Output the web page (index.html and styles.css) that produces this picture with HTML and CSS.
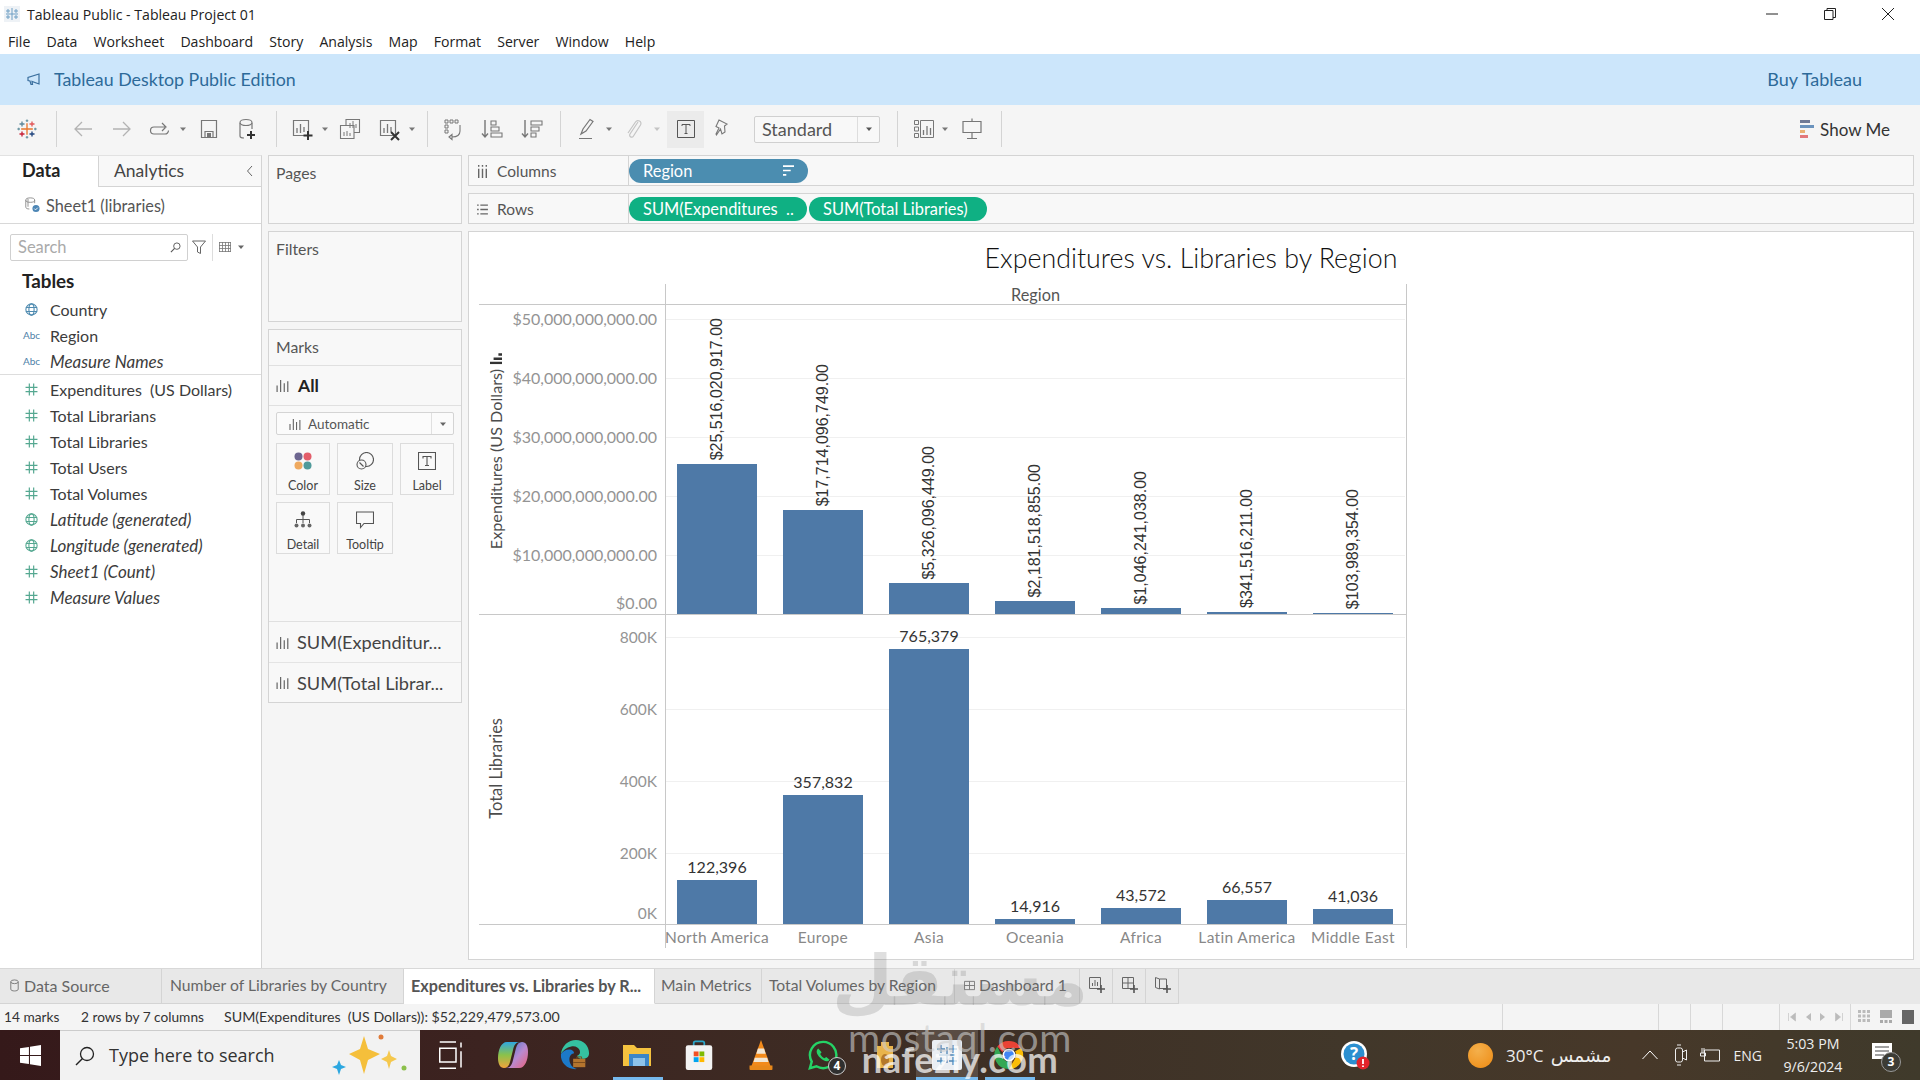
FILE: index.html
```html
<!DOCTYPE html>
<html lang="en">
<head>
<meta charset="utf-8">
<title>Tableau Public - Tableau Project 01</title>
<link rel="stylesheet" href="styles.css">
</head>
<body>
<svg class="defs" aria-hidden="true">
  <defs>
    <symbol id="hash" viewBox="0 0 12 12"><path d="M4 .5v11M8 .5v11M.5 4h11M.5 8h11" fill="none" stroke="currentColor" stroke-width="1.1"/></symbol>
    <symbol id="globe" viewBox="0 0 12 12"><g fill="none" stroke="currentColor" stroke-width="1"><circle cx="6" cy="6" r="5.2"/><ellipse cx="6" cy="6" rx="2.4" ry="5.2"/><path d="M.8 4.2h10.4M.8 7.8h10.4"/></g></symbol>
    <symbol id="bars" viewBox="0 0 12 12"><path d="M1 6v6M4.300 1v11M7.600 4v8M10.900 2v10" fill="none" stroke="currentColor" stroke-width="1"/></symbol>
    <symbol id="caret" viewBox="0 0 8 8"><path d="M1 2.500h6L4 6z" fill="currentColor"/></symbol>
    <symbol id="tcross" viewBox="0 0 24 24"><g stroke-width="1.600" fill="none"><path d="M12 5v14M5 12h14" stroke="#e8762d"/><path d="M6 3v6M3 6h6" stroke="#5b879b"/><path d="M18 3v6M15 6h6" stroke="#e15759"/><path d="M6 15v6M3 18h6" stroke="#c72037"/><path d="M18 15v6M15 18h6" stroke="#1f447e"/><path d="M12 .5v3M10.500 2h3M12 20.500v3M10.500 22h3M2 10.500v3M.5 12h3M22 10.500v3M20.500 12h3" stroke="#7099a6"/></g></symbol>
  </defs>
</svg>

<header class="titlebar">
  <svg class="appicon" viewBox="0 0 16 16"><rect width="16" height="16" fill="#eef2f6"/><path d="M8 2v12M2 8h12M4 3v4M2 5h4M12 3v4M10 5h4M4 9v4M2 11h4M12 9v4M10 11h4" stroke="#6f9fc4" stroke-width="1" fill="none"/></svg>
  <span class="apptitle">Tableau Public - Tableau Project 01</span>
  <div class="winbtns">
    <svg viewBox="0 0 12 12"><path d="M0 6h12" stroke="#222"/></svg>
    <svg viewBox="0 0 12 12"><path d="M.5 2.500h8.500v9H.5zM3 2.500V.5h8.500v9H9" fill="none" stroke="#222"/></svg>
    <svg viewBox="0 0 12 12"><path d="M0 0l12 12M12 0L0 12" stroke="#222"/></svg>
  </div>
</header>

<nav class="menubar">
  <span>File</span><span>Data</span><span>Worksheet</span><span>Dashboard</span><span>Story</span><span>Analysis</span><span>Map</span><span>Format</span><span>Server</span><span>Window</span><span>Help</span>
</nav>

<div class="banner">
  <svg class="horn" viewBox="0 0 14 14"><path d="M1 5.500v3l2 .5 1 3.500h1.500L5 9.500l7 2.500V2L1 5.500zM12 2v10" fill="none" stroke="#3a6f9e" stroke-width="1.200"/></svg>
  <span class="banner-title">Tableau Desktop Public Edition</span>
  <span class="buy">Buy Tableau</span>
</div>

<div class="toolbar">
  <svg class="ticon logo m17"><use href="#tcross"/></svg>
  <i class="sep m19"></i>
  <svg class="ticon faded m14" viewBox="0 0 24 24"><path d="M21 12H4M11 5l-7 7 7 7" fill="none" stroke="currentColor" stroke-width="1.300"/></svg>
  <svg class="ticon faded m15" viewBox="0 0 24 24"><path d="M3 12h17M13 5l7 7-7 7" fill="none" stroke="currentColor" stroke-width="1.300"/></svg>
  <svg class="ticon m13" viewBox="0 0 24 24"><path d="M18 10H7a3.500 3.500 0 0 0 0 7h11a3.500 3.500 0 0 0 3.500-3.500M15 6l4 4-4 4" fill="none" stroke="currentColor" stroke-width="1.200"/></svg>
  <svg class="tcaret m8"><use href="#caret"/></svg>
  <svg class="ticon m10" viewBox="0 0 24 24"><path d="M4.500 3.500h15v17h-15zM8 20.500v-6h8v6" fill="none" stroke="currentColor" stroke-width="1.200"/><path d="M10 16h4v4h-4z" fill="currentColor"/></svg>
  <svg class="ticon m14" viewBox="0 0 24 24"><path d="M5 6v13c0 1 1.500 2 4 2M17 6v6" fill="none" stroke="currentColor" stroke-width="1.200"/><ellipse cx="11" cy="5.500" rx="6" ry="3" fill="none" stroke="currentColor" stroke-width="1.200"/><path d="M16 14v8M12 18h8" stroke="#333" stroke-width="2"/></svg>
  <i class="sep m17"></i>
  <svg class="ticon m13" viewBox="0 0 24 24"><path d="M3.500 3.500h15v15h-15z" fill="none" stroke="currentColor" stroke-width="1.200"/><path d="M7 11v5M10.500 7v9M14 10v5" stroke="currentColor" stroke-width="1.300"/><path d="M18 14v9M13.500 18.500h9" stroke="#333" stroke-width="2"/></svg>
  <svg class="tcaret m7"><use href="#caret"/></svg>
  <svg class="ticon m9" viewBox="0 0 24 24"><path d="M8 8V2.500h13.500v13H16M2.500 8.500h13.500v13H2.500z" fill="none" stroke="currentColor" stroke-width="1.100"/><path d="M12 11V6M15 11V4M18 11V7M6 19v-4M9 19v-5M12 19v-3" stroke="currentColor"/></svg>
  <svg class="ticon m15" viewBox="0 0 24 24"><path d="M3.500 3.500h15v15h-15z" fill="none" stroke="currentColor" stroke-width="1.200"/><path d="M7 11v5M10.500 7v9M14 10v5" stroke="currentColor" stroke-width="1.300"/><path d="M14 15l8 8M22 15l-8 8" stroke="#333" stroke-width="2"/></svg>
  <svg class="tcaret m7"><use href="#caret"/></svg>
  <i class="sep m11"></i>
  <svg class="ticon m12" viewBox="0 0 24 24"><path d="M5 3h3v3H5zM10 3h3v3h-3zM15 3h3v3h-3zM5 8h3v3H5zM5 13h3v3H5z" fill="none" stroke="currentColor"/><path d="M20 8v6c0 4-3 6-8 6M9 20l3-2.500v5z" fill="none" stroke="currentColor" stroke-width="1.100"/></svg>
  <svg class="ticon m16" viewBox="0 0 24 24"><path d="M5 3v17M2 16.500L5 20l3-3.500" fill="none" stroke="currentColor" stroke-width="1.400"/><path d="M11 4h5v4h-5zM11 10h8v4h-8zM11 16h11v4H11z" fill="none" stroke="currentColor" stroke-width="1.100"/></svg>
  <svg class="ticon m16" viewBox="0 0 24 24"><path d="M5 3v17M2 16.500L5 20l3-3.500" fill="none" stroke="currentColor" stroke-width="1.400"/><path d="M11 4h11v4H11zM11 10h8v4h-8zM11 16h5v4h-5z" fill="none" stroke="currentColor" stroke-width="1.100"/></svg>
  <i class="sep m16"></i>
  <svg class="ticon m14" viewBox="0 0 24 24"><path d="M6 17l2-5L15 2.500l3 2L11 14l-5 3zM4 21.500h13" fill="none" stroke="currentColor" stroke-width="1.200"/></svg>
  <svg class="tcaret m6"><use href="#caret"/></svg>
  <svg class="ticon clip m8" viewBox="0 0 24 24"><path d="M17 5l-8 12c-1.500 2.500 2 4.500 3.500 2l7-11c2-3.500-3-6-5-3L7 16" fill="none" stroke="currentColor" stroke-width="1.200"/></svg>
  <svg class="tcaret clip m8"><use href="#caret"/></svg>
  <span class="tactive m6"><svg viewBox="0 0 18 18"><path d="M.5.5h17v17H.5z" fill="none" stroke="#555"/><path d="M5 6V4.500h8V6M9 4.500v9M7.500 13.500h3" fill="none" stroke="#555"/></svg></span>
  <svg class="ticon m6" viewBox="0 0 24 24"><path d="M9 3l8 4-2.500 2 .5 6-3 2-1.500-5-4 6-.5-1 3-6-3-1.500z" fill="none" stroke="currentColor" stroke-width="1.100"/></svg>
  <div class="fitbox m20"><span class="fit-text">Standard</span><span class="fit-drop"><svg class="tcaret"><use href="#caret"/></svg></span></div>
  <i class="sep m17"></i>
  <svg class="ticon m14" viewBox="0 0 24 24"><path d="M2.500 3.500h4v4h-4zM2.500 10h4v4h-4zM2.500 16.500h4v4h-4zM8.500 3.500h13v17h-13z" fill="none" stroke="currentColor"/><path d="M11.500 18v-5M15 18v-9M18.500 18v-7" stroke="currentColor" stroke-width="1.300"/></svg>
  <svg class="tcaret m5"><use href="#caret"/></svg>
  <svg class="ticon m11" viewBox="0 0 24 24"><path d="M3 4.500h18v11H3zM12 15.500v6M7 21.500h10M12 1.500v3" fill="none" stroke="currentColor" stroke-width="1.200"/></svg>
  <i class="sep m17"></i>
  <div class="showme">
    <svg viewBox="0 0 14 18"><path d="M0 0h10v3H0z" fill="#6f7a96"/><path d="M0 5h14v3H0z" fill="#6b93bd"/><path d="M0 10h5v3H0z" fill="#e9b071"/><path d="M0 15h8v3H0z" fill="#e2777a"/></svg>
    <span>Show Me</span>
  </div>
</div>

<main class="main">
  <aside class="datapane">
    <div class="ptabs">
      <span class="ptab-data">Data</span>
      <span class="ptab-an">Analytics<svg viewBox="0 0 8 12"><path d="M6 1L1.500 6 6 11" fill="none" stroke="#666"/></svg></span>
    </div>
    <div class="source">
      <svg viewBox="0 0 18 18"><g fill="none" stroke="#888"><ellipse cx="7" cy="3.500" rx="5" ry="2.500"/><path d="M2 3.500v8c0 1 1.500 2 4 2M12 3.500V7"/><path d="M4.500 2v9"/></g><circle cx="13.500" cy="13" r="4" fill="#4d86b5"/><path d="M11.500 13l1.500 1.500 2.500-2.500" stroke="#fff" fill="none"/></svg>
      <span>Sheet1 (libraries)</span>
    </div>
    <div class="searchrow">
      <div class="search"><span>Search</span><svg viewBox="0 0 12 12"><circle cx="7.500" cy="4.500" r="3.500" fill="none" stroke="#555"/><path d="M5 7l-4 4" stroke="#555" stroke-width="1.200"/></svg></div>
      <svg class="filt" viewBox="0 0 14 14"><path d="M.5 1h13L8.500 7v6.500l-3-1.500V7z" fill="none" stroke="#666"/></svg>
      <i class="vbar"></i>
      <svg class="gridic" viewBox="0 0 12 10"><path d="M0 .5h12M0 3.500h12M0 6.500h12M0 9.500h12M.5 0v10M3.500 0v10M6.500 0v10M9.500 0v10M11.500 0v10" stroke="#777" stroke-width=".8"/></svg>
      <svg class="gridcaret"><use href="#caret"/></svg>
    </div>
    <h3 class="tables">Tables</h3>
    <ul class="fields">
      <li><svg class="blue"><use href="#globe"/></svg><span>Country</span></li>
      <li><b class="abc">Abc</b><span>Region</span></li>
      <li class="divide"><b class="abc">Abc</b><em>Measure Names</em></li>
      <li><svg class="green"><use href="#hash"/></svg><span>Expenditures&nbsp; (US Dollars)</span></li>
      <li><svg class="green"><use href="#hash"/></svg><span>Total Librarians</span></li>
      <li><svg class="green"><use href="#hash"/></svg><span>Total Libraries</span></li>
      <li><svg class="green"><use href="#hash"/></svg><span>Total Users</span></li>
      <li><svg class="green"><use href="#hash"/></svg><span>Total Volumes</span></li>
      <li><svg class="green"><use href="#globe"/></svg><em>Latitude (generated)</em></li>
      <li><svg class="green"><use href="#globe"/></svg><em>Longitude (generated)</em></li>
      <li><svg class="green"><use href="#hash"/></svg><em>Sheet1 (Count)</em></li>
      <li><svg class="green"><use href="#hash"/></svg><em>Measure Values</em></li>
    </ul>
  </aside>

  <div class="cards">
    <section class="card pages"><h4>Pages</h4></section>
    <section class="card filters"><h4>Filters</h4></section>
    <section class="card marks">
      <h4 class="marks-h">Marks</h4>
      <div class="marks-all"><svg><use href="#bars"/></svg><strong>All</strong></div>
      <div class="marks-body">
        <div class="marktype"><svg><use href="#bars"/></svg><span>Automatic</span><span class="mt-drop"><svg><use href="#caret"/></svg></span></div>
        <div class="markbtns">
          <div class="mbtn"><svg viewBox="0 0 18 18"><circle cx="4.500" cy="4.500" r="4" fill="#6d6690"/><circle cx="13.500" cy="4.500" r="4" fill="#e35d6a"/><circle cx="4.500" cy="13.500" r="4" fill="#efa95f"/><circle cx="13.500" cy="13.500" r="4" fill="#4f9a9a"/></svg><span>Color</span></div>
          <div class="mbtn"><svg viewBox="0 0 18 18"><g fill="none" stroke="#555" stroke-width="1.100"><circle cx="10.500" cy="7.500" r="7"/><circle cx="5.500" cy="12.500" r="4.500" fill="#f8f8f8"/><path d="M3.500 10.500l4 4"/></g></svg><span>Size</span></div>
          <div class="mbtn"><svg viewBox="0 0 18 18"><path d="M.5.5h17v17H.5z" fill="none" stroke="#555" stroke-width="1.100"/><path d="M5 6.500V4.500h8v2M9 4.500v9M7 13.500h4" fill="none" stroke="#555" stroke-width="1.100"/></svg><span>Label</span></div>
          <div class="mbtn"><svg viewBox="0 0 18 18"><circle cx="9" cy="2.500" r="2.200" fill="#444"/><path d="M9 4v8M2.500 12V8.500h13V12" fill="none" stroke="#555"/><circle cx="2.500" cy="14.500" r="2" fill="#666"/><circle cx="9" cy="14.500" r="2" fill="#666"/><circle cx="15.500" cy="14.500" r="2" fill="#666"/></svg><span>Detail</span></div>
          <div class="mbtn"><svg viewBox="0 0 18 18"><path d="M.5 1h17v11.500H8L4.500 16.500v-4H.5z" fill="none" stroke="#555" stroke-width="1.100"/></svg><span>Tooltip</span></div>
        </div>
      </div>
      <div class="marks-pill"><svg><use href="#bars"/></svg><span>SUM(Expenditur...</span></div>
      <div class="marks-pill"><svg><use href="#bars"/></svg><span>SUM(Total Librar...</span></div>
    </section>
  </div>

  <div class="work">
    <div class="shelf">
      <div class="shelf-label"><svg viewBox="0 0 10 12"><path d="M1.500 0v1.500M5 0v1.500M8.500 0v1.500M1.500 3.500V12M5 3.500V12M8.500 3.500V12" stroke="#666" stroke-width="1.300" fill="none"/></svg><span>Columns</span></div>
      <div class="pill blue-pill">Region<svg viewBox="0 0 10 10"><path d="M0 1h10M0 5h7M0 9h3" stroke="#fff" stroke-width="1.500"/></svg></div>
    </div>
    <div class="shelf">
      <div class="shelf-label"><svg viewBox="0 0 10 12"><path d="M0 2h1.500M3 2h7M0 6h1.500M3 6h7M0 10h1.500M3 10h7" stroke="#666" stroke-width="1.200"/></svg><span>Rows</span></div>
      <div class="pill green-pill">SUM(Expenditures&nbsp; ..</div>
      <div class="pill green-pill">SUM(Total Libraries)</div>
    </div>
    <section class="canvas">
      <h2 class="viz-title">Expenditures vs. Libraries by Region</h2>
      <div class="plot">
        <div class="prow head"><div></div><div class="plot-cell head-cell">Region</div></div>

        <div class="prow pane pane-a">
          <div class="axis">
            <div class="axis-title"><span>Expenditures (US Dollars)</span><svg viewBox="0 0 10 10"><path d="M1 0v10M4.500 3v7M8 7v3" stroke="#333" stroke-width="2"/></svg></div>
            <div class="ticks">
              <div class="tick">$50,000,000,000.00</div><div class="tick">$40,000,000,000.00</div><div class="tick">$30,000,000,000.00</div><div class="tick">$20,000,000,000.00</div><div class="tick">$10,000,000,000.00</div><div class="tick">$0.00</div>
            </div>
          </div>
          <div class="plot-cell">
            <div class="gridlines"><i></i><i></i><i></i><i></i><i></i></div>
            <div class="bars">
              <div class="bcol"><span class="vlabel">$25,516,020,917.00</span><div class="bar" style="height:150px"></div></div>
              <div class="bcol"><span class="vlabel">$17,714,096,749.00</span><div class="bar" style="height:104px"></div></div>
              <div class="bcol"><span class="vlabel">$5,326,096,449.00</span><div class="bar" style="height:31px"></div></div>
              <div class="bcol"><span class="vlabel">$2,181,518,855.00</span><div class="bar" style="height:13px"></div></div>
              <div class="bcol"><span class="vlabel">$1,046,241,038.00</span><div class="bar" style="height:6px"></div></div>
              <div class="bcol"><span class="vlabel">$341,516,211.00</span><div class="bar" style="height:2px"></div></div>
              <div class="bcol"><span class="vlabel">$103,989,354.00</span><div class="bar" style="height:1px"></div></div>
            </div>
          </div>
        </div>

        <div class="prow pane pane-b">
          <div class="axis">
            <div class="axis-title"><span>Total Libraries</span></div>
            <div class="ticks">
              <div class="tick">800K</div><div class="tick">600K</div><div class="tick">400K</div><div class="tick">200K</div><div class="tick">0K</div>
            </div>
          </div>
          <div class="plot-cell">
            <div class="gridlines"><i></i><i></i><i></i><i></i></div>
            <div class="bars">
              <div class="bcol"><span class="hlabel">122,396</span><div class="bar" style="height:44px"></div></div>
              <div class="bcol"><span class="hlabel">357,832</span><div class="bar" style="height:129px"></div></div>
              <div class="bcol"><span class="hlabel">765,379</span><div class="bar" style="height:275px"></div></div>
              <div class="bcol"><span class="hlabel">14,916</span><div class="bar" style="height:5px"></div></div>
              <div class="bcol"><span class="hlabel">43,572</span><div class="bar" style="height:16px"></div></div>
              <div class="bcol"><span class="hlabel">66,557</span><div class="bar" style="height:24px"></div></div>
              <div class="bcol"><span class="hlabel">41,036</span><div class="bar" style="height:15px"></div></div>
            </div>
          </div>
        </div>

        <div class="prow xrow">
          <div></div>
          <div class="plot-cell xcats"><span>North America</span><span>Europe</span><span>Asia</span><span>Oceania</span><span>Africa</span><span>Latin America</span><span>Middle East</span></div>
        </div>
      </div>
    </section>
  </div>
</main>

<div class="tabs">
  <div class="tab t1"><svg viewBox="0 0 10 14"><ellipse cx="5" cy="3" rx="4" ry="2" fill="none" stroke="#777"/><path d="M1 3v8c0 2.500 8 2.500 8 0V3" fill="none" stroke="#777"/></svg>Data Source</div>
  <div class="tab t2">Number of Libraries by Country</div>
  <div class="tab t3 active">Expenditures vs. Libraries by R...</div>
  <div class="tab t4">Main Metrics</div>
  <div class="tab t5">Total Volumes by Region</div>
  <div class="tab t6"><svg viewBox="0 0 12 12"><path d="M.5 1.500h11v9H.5zM6 1.500v9M.5 6h11" fill="none" stroke="#777"/></svg>Dashboard 1</div>
  <div class="tab tn"><svg viewBox="0 0 18 18"><path d="M1.500 1.500h11v11h-11z" fill="none" stroke="#666"/><path d="M4.500 10V7M7 10V4M9.500 10V6" stroke="#666"/><path d="M13 9v8M9 13h8" stroke="#555" stroke-width="1.600"/></svg></div>
  <div class="tab tn"><svg viewBox="0 0 18 18"><path d="M1.500 1.500h11v11h-11zM7 1.500v11M1.500 7h11" fill="none" stroke="#666"/><path d="M13 9v8M9 13h8" stroke="#555" stroke-width="1.600"/></svg></div>
  <div class="tab tn"><svg viewBox="0 0 18 18"><path d="M1.500 1.500l4 1.500v10l-4-1.500zM5.500 3h7v9.500h-7" fill="none" stroke="#666"/><path d="M13 9v8M9 13h8" stroke="#555" stroke-width="1.600"/></svg></div>
</div>

<div class="status">
  <span class="s1">14 marks</span><span class="s2">2 rows by 7 columns</span><span class="s3">SUM(Expenditures&nbsp; (US Dollars)): $52,229,479,573.00</span>
  <div class="cells">
    <i class="c156"></i><i class="c32"></i><i class="c32"></i><i class="c57"></i>
    <div class="navcell">
      <svg viewBox="0 0 8 10"><path d="M.5 1v8M7.500 1L2.500 5l5 4z" fill="#bbb" stroke="#bbb" stroke-width=".6"/></svg>
      <svg viewBox="0 0 8 10"><path d="M7 1L2 5l5 4z" fill="#bbb"/></svg>
      <svg viewBox="0 0 8 10"><path d="M1 1l5 4-5 4z" fill="#bbb"/></svg>
      <svg viewBox="0 0 8 10"><path d="M7.500 1v8M.5 1l5 4-5 4z" fill="#bbb" stroke="#bbb" stroke-width=".6"/></svg>
    </div>
    <div class="viewcell">
      <svg viewBox="0 0 12 14"><path d="M0 0h3v3H0zM4.500 0h3v3h-3zM9 0h3v3H9zM0 4.500h3v3H0zM4.500 4.500h3v3h-3zM9 4.500h3v3H9zM0 9h3v3H0zM4.500 9h3v3h-3zM9 9h3v3H9z" fill="#bbb"/></svg>
      <svg viewBox="0 0 12 14"><path d="M0 0h12v8H0zM0 10h3v3H0zM4.500 10h3v3h-3zM9 10h3v3H9z" fill="#aaa"/></svg>
      <svg viewBox="0 0 12 14"><path d="M0 0h12v14H0z" fill="#666"/></svg>
    </div>
  </div>
</div>

<footer class="taskbar">
  <div class="start"><svg viewBox="0 0 20 20"><path d="M0 3l8.500-1.200v7.700H0zM9.500 1.700L20 0v9.500H9.500zM0 10.500h8.500v7.700L0 17zM9.500 10.500H20V20L9.500 18.300z" fill="#fff"/></svg></div>
  <div class="tsearch">
    <svg class="mag" viewBox="0 0 20 20"><circle cx="12" cy="8" r="6.500" fill="none" stroke="#222" stroke-width="1.300"/><path d="M7.500 12.500L1 19" stroke="#222" stroke-width="1.500"/></svg>
    <span>Type here to search</span>
    <svg class="spark" viewBox="0 0 76 46"><path d="M32 3l4 13 12 5-12 6-4 14-4-14-11-6 11-5z" fill="#f5bf3b"/><path d="M57 17l2 6 6 3-6 3-2 7-2-7-6-3 6-3z" fill="#f5c84d"/><path d="M7 27l2 5 5 2-5 2-2 6-2-6-5-2 5-2z" fill="#2ca7e0"/><circle cx="49" cy="4" r="2.500" fill="#e07b39"/><circle cx="72" cy="35" r="2.500" fill="#8cc04b"/></svg>
  </div>
  <div class="tapp"><svg viewBox="0 0 20 24"><path d="M1 1.500h13M1 22.500h13M1 6.500h13v11H1zM18 2v4M18 9v13" fill="none" stroke="#fff" stroke-width="1.200"/></svg></div>
  <div class="tapp"><svg viewBox="0 0 30 28"><defs><linearGradient id="cop1" x1="0" y1="0" x2="0" y2="1"><stop offset="0" stop-color="#2fa7e0"/><stop offset=".5" stop-color="#8ac24a"/><stop offset="1" stop-color="#f2a33c"/></linearGradient><linearGradient id="cop2" x1="0" y1="0" x2="1" y2="1"><stop offset="0" stop-color="#3878d0"/><stop offset=".55" stop-color="#b98ad0"/><stop offset="1" stop-color="#e9607a"/></linearGradient></defs><path d="M9 1h13c-4 0-6 3-7 8l-3 12c-1 4-3 6-6 6-4 0-6-4-6-10C0 9 3 1 9 1z" fill="url(#cop1)"/><path d="M21 27H8c4 0 6-3 7-8l3-12c1-4 3-6 6-6 4 0 6 4 6 10 0 8-3 16-9 16z" fill="url(#cop2)"/></svg></div>
  <div class="tapp"><svg viewBox="0 0 32 32"><path d="M1 15C2 6 9 0 17 0c8 0 14 6 14 14 0 4-3 6-7 6-3 0-5-1-6-3 3-1 4-3 3-6-1-3-5-5-9-4-5 1-9 4-11 8z" fill="#35c1a0"/><path d="M1 15c2-3 5-5 9-5 3 0 5 2 5 4-5 1-6 6-4 11 1 3 4 5 7 6C9 32 0 25 1 15z" fill="#1c79c9"/><path d="M14 20h13v9H14z" fill="#b4742e"/><path d="M18 20v-2h5v2M14 24h13" fill="none" stroke="#7a4b1c"/></svg></div>
  <div class="tapp open"><svg viewBox="0 0 30 26"><path d="M1 3h11l3 3h14v18H1z" fill="#f4c23f"/><path d="M7 12h20v12H7z" fill="#3b86c8"/><path d="M11 16h12v8H11z" fill="#8ec3ea"/></svg></div>
  <div class="tapp"><svg viewBox="0 0 30 34"><path d="M9 7V3.500a2 2 0 0 1 2-2h8a2 2 0 0 1 2 2V7" fill="none" stroke="#2ba6c9" stroke-width="2"/><rect x="0" y="6" width="30" height="28" rx="2.500" fill="#f3f3f3"/><path d="M9 13h5.500v5.500H9z" fill="#f25022"/><path d="M15.500 13H21v5.500h-5.500z" fill="#7fba00"/><path d="M9 19.500h5.500V25H9z" fill="#00a4ef"/><path d="M15.500 19.500H21V25h-5.500z" fill="#ffb900"/></svg></div>
  <div class="tapp"><svg viewBox="0 0 26 34"><path d="M13 0L2 30h22z" fill="#f28a1b"/><path d="M9.500 9.500h7l1.800 6H7.700zM6 20h14l1.500 5h-17z" fill="#f1e6d4"/><path d="M0 29h26v4a1 1 0 0 1-1 1H1a1 1 0 0 1-1-1z" fill="#e8881a"/></svg></div>
  <div class="tapp wa"><svg viewBox="0 0 32 32"><path d="M16 2a14 14 0 0 0-12 21L2 30l7-2A14 14 0 1 0 16 2z" fill="none" stroke="#25d366" stroke-width="2.600"/><path d="M11 9c-3 2-2 6 2 10s8 5 10 2l-3.500-3-2 1.500c-2-1-3.500-2.500-4.500-4.500l1.500-2z" fill="#25d366"/></svg><b class="wa-badge">4</b></div>
  <div class="tapp"><svg viewBox="0 0 26 30"><path d="M9 2h8v4h4v22H5V6h4z" fill="#e9b44c"/><path d="M13 14a4 6 0 1 1-.01 0z" fill="#b5792a"/></svg></div>
  <div class="tapp current"><svg viewBox="0 0 30 30"><rect width="30" height="30" rx="2" fill="#eaeef3"/><svg x="3" y="3" width="24" height="24" viewBox="0 0 24 24"><path d="M12 4v16M4 12h16M6 2v8M2 6h8M18 2v8M14 6h8M6 14v8M2 18h8M18 14v8M14 18h8" stroke="#4f86b5" stroke-width="1.300" fill="none"/></svg></svg></div>
  <div class="tapp open chrome"><svg viewBox="0 0 32 32"><path d="M16 1a15 15 0 0 1 13 7.500H16a7.500 7.500 0 0 0-7 4.500L3.500 7A15 15 0 0 1 16 1z" fill="#ea4335"/><path d="M29 8.500A15 15 0 0 1 16 31l6.500-11.300A7.500 7.500 0 0 0 22.500 12z" fill="#fbbc05"/><path d="M16 31A15 15 0 0 1 3.500 7L9.500 19.500A7.500 7.500 0 0 0 17 23z" fill="#34a853"/><circle cx="16" cy="16" r="6" fill="#4285f4" stroke="#fff" stroke-width="1.500"/></svg></div>

  <svg class="helpic" viewBox="0 0 30 32"><circle cx="14" cy="15" r="13" fill="#fff"/><circle cx="14" cy="15" r="10.500" fill="#2b8fd0"/><text x="14" y="21" class="helpq">?</text><circle cx="23" cy="24" r="6.500" fill="#e3242b"/><path d="M23 20v5M23 26.500v1.500" stroke="#fff" stroke-width="1.800"/></svg>
  <div class="sun"></div>
  <span class="temp">30°C</span>
  <span class="weather" lang="ar" dir="rtl">مشمس</span>
  <svg class="chev" viewBox="0 0 16 10"><path d="M.5 9L8 1l7.500 8" fill="none" stroke="#fff"/></svg>
  <svg class="cam" viewBox="0 0 14 22"><path d="M1.500 6v10a2 2 0 0 0 2 2h3a2 2 0 0 0 2-2V6a2 2 0 0 0-2-2h-3a2 2 0 0 0-2 2zM8.500 8l4-2v10l-4-2zM3 1h4M3 21h4" fill="none" stroke="#eee"/></svg>
  <svg class="batt" viewBox="0 0 20 16"><path d="M4.500 3h15v11h-15zM2 1v5M4 1v5M.5 6h5v3h-5z" fill="none" stroke="#eee"/></svg>
  <span class="eng">ENG</span>
  <div class="clock"><span>5:03 PM</span><span>9/6/2024</span></div>
  <div class="notif"><svg viewBox="0 0 20 20"><path d="M0 0h20v16H0z" fill="#fff"/><path d="M3 4h14M3 8h14M3 12h9" stroke="#444"/></svg><b>3</b></div>
</footer>

<div class="watermark" aria-hidden="true">
  <span class="wm-ar" lang="ar" dir="rtl">مستقل</span>
  <span class="wm-m">mostaql.com</span>
  <span class="wm-n">nafezly.com</span>
</div>
</body>
</html>
```

FILE: styles.css
```css
* { box-sizing: border-box; }
html, body { margin: 0; padding: 0; }
body {
  width: 1920px; height: 1080px; overflow: hidden; position: relative;
  display: flex; flex-direction: column;
  font-family: Lato, "Open Sans", sans-serif; color: #333; background: #fff;
}
.defs { position: absolute; width: 0; height: 0; }
h2, h3, h4, ul { margin: 0; padding: 0; font-weight: 400; }
i { font-style: normal; }
em { font-style: italic; }

/* window chrome */
.titlebar { height: 27px; display: flex; align-items: center; padding: 1px 0 0 4px; background: #fff; flex: none; }
.appicon { width: 16px; height: 16px; }
.apptitle { font: 14.100px "Open Sans", sans-serif; color: #222; margin-left: 7px; }
.winbtns { margin-left: auto; display: flex; padding-right: 26px; gap: 46px; }
.winbtns svg { width: 12px; height: 12px; }

.menubar { height: 27px; display: flex; align-items: center; padding: 1px 0 0 8px; gap: 16.100px; font: 14.100px "Open Sans", sans-serif; color: #222; flex: none; }

.banner { height: 51px; background: #cce6fb; display: flex; align-items: center; padding: 0 0 1px 27px; flex: none; line-height: 22px; }
.horn { width: 14px; height: 14px; }
.banner-title { margin-left: 13px; font-size: 17.800px; color: #2d6a99; }
.buy { margin-left: auto; margin-right: 58px; font-size: 18px; color: #2d6a99; }

/* toolbar */
.toolbar { height: 50px; background: #f5f5f5; display: flex; align-items: center; flex: none; color: #777; padding-bottom: 2px; }
.ticon { width: 24px; height: 24px; color: #777; flex: none; }
.ticon.logo { width: 20px; height: 20px; }
.faded { color: #b3b3b3; }
.clip { color: #c4c4c4; }
.tcaret { width: 8px; height: 8px; color: #777; flex: none; }
.tcaret.clip { color: #c4c4c4; }
.sep { width: 1px; height: 36px; background: #d4d4d4; flex: none; }
.tactive { width: 37px; height: 37px; background: #ebebeb; display: flex; align-items: center; justify-content: center; flex: none; }
.tactive svg { width: 18px; height: 18px; }
.fitbox { width: 126px; height: 27px; border: 1px solid #d0d0d0; border-radius: 2px; display: flex; align-items: center; flex: none; background: #f8f8f8; }
.fit-text { flex: 1; padding-left: 7px; font-size: 18px; color: #555; }
.fit-drop { width: 22px; height: 100%; border-left: 1px solid #ddd; display: flex; align-items: center; justify-content: center; }
.fit-drop .tcaret { color: #555; }
.showme { margin-left: auto; margin-right: 30px; display: flex; align-items: center; gap: 6px; font-size: 17px; color: #333; }
.showme svg { width: 14px; height: 18px; }
.m5 { margin-left: 5px; } .m6 { margin-left: 6px; } .m7 { margin-left: 7px; } .m8 { margin-left: 8px; }
.m9 { margin-left: 9px; } .m10 { margin-left: 10px; } .m11 { margin-left: 11px; } .m12 { margin-left: 12px; }
.m13 { margin-left: 13px; } .m14 { margin-left: 14px; } .m15 { margin-left: 15px; } .m16 { margin-left: 16px; }
.m17 { margin-left: 17px; } .m19 { margin-left: 19px; } .m20 { margin-left: 20px; }

/* main area */
.main { height: 813px; flex: none; display: flex; background: #f5f5f5; }
.datapane { width: 262px; background: #fff; border-right: 1px solid #d4d4d4; border-top: 1px solid #e2e2e2; margin-right: 6px; flex: none; }
.ptabs { height: 31px; display: flex; }
.ptab-data { width: 98px; padding-left: 22px; font-size: 18px; font-weight: 700; color: #222; line-height: 29px; }
.ptab-an { flex: 1; background: #f8f8f8; border-left: 1px solid #d4d4d4; border-bottom: 1px solid #d4d4d4; padding-left: 15px; font-size: 17.500px; line-height: 30px; color: #444; display: flex; align-items: center; justify-content: space-between; padding-right: 7px; }
.ptab-an svg { width: 8px; height: 12px; }
.source { height: 37px; border-bottom: 1px solid #d8d8d8; display: flex; align-items: center; padding-left: 24px; gap: 6px; font-size: 16.300px; color: #555; }
.source svg { width: 16px; height: 18px; }
.searchrow { height: 46px; display: flex; align-items: center; padding: 0 0 0 10px; }
.search { width: 178px; height: 27px; border: 1px solid #d0d0d0; border-radius: 2px; display: flex; align-items: center; justify-content: space-between; padding: 0 6px 0 7px; font-size: 16.500px; color: #aaa; }
.search svg { width: 11px; height: 11px; }
.filt { width: 14px; height: 14px; margin-left: 4px; }
.vbar { width: 1px; height: 27px; background: #ddd; margin-left: 6px; }
.gridic { width: 12px; height: 10px; margin-left: 6px; }
.gridcaret { width: 8px; height: 8px; margin-left: 6px; color: #666; }
.tables { font-size: 18.800px; font-weight: 700; color: #222; padding-left: 22px; height: 26px; line-height: 22px; }
.fields { list-style: none; }
.fields li { height: 26.100px; display: flex; align-items: center; padding-left: 19px; font-size: 16px; color: #3c3c3c; }
.fields li em { font-size: 17px; }
.fields li svg { width: 13px; height: 13px; margin-left: 6px; margin-right: 12px; flex: none; }
.fields li .abc { width: 25px; font-size: 10px; font-weight: 400; color: #4f7fa8; text-align: center; margin-right: 6px; flex: none; }
.fields li.divide { border-bottom: 1px solid #ddd; height: 27px; margin-bottom: 1px; }
.blue { color: #4f8bb0; }
.green { color: #55a891; }

.cards { width: 194px; flex: none; margin-right: 6px; display: flex; flex-direction: column; gap: 7px; }
.card { background: #f8f8f8; border: 1px solid #d4d4d4; }
.card h4 { font-size: 15.800px; color: #555; padding: 7px 7px 0; }
.pages { height: 69px; }
.filters { height: 91px; }
.marks { height: 374px; display: flex; flex-direction: column; }
.card h4.marks-h { height: 36px; padding: 7px 7px 0; border-bottom: 1px solid #e0e0e0; flex: none; }
.marks-all { height: 40px; display: flex; align-items: center; padding-left: 7px; border-bottom: 1px solid #e0e0e0; flex: none; }
.marks-all svg { width: 13px; height: 13px; color: #555; }
.marks-all strong { margin-left: 9px; font-size: 17.500px; color: #222; }
.marks-body { flex: 1; padding: 6px 7px 0; border-bottom: 1px solid #e0e0e0; }
.marktype { height: 23px; border: 1px solid #d4d4d4; border-radius: 2px; display: flex; align-items: center; padding-left: 12px; font-size: 13.500px; color: #555; background: #fbfbfb; }
.marktype > svg { width: 12px; height: 12px; color: #555; margin-right: 7px; }
.mt-drop { margin-left: auto; width: 22px; height: 100%; border-left: 1px solid #e0e0e0; display: flex; align-items: center; justify-content: center; }
.mt-drop svg { width: 8px; height: 8px; color: #666; }
.markbtns { display: grid; grid-template-columns: 54px 56px 54px; grid-auto-rows: 52px; gap: 7px; margin-top: 8px; }
.mbtn { border: 1px solid #dcdcdc; display: flex; flex-direction: column; align-items: center; font-size: 12.500px; color: #444; padding-top: 8px; background: #f9f9f9; }
.mbtn svg { width: 18px; height: 18px; margin-bottom: 8px; }
.marks-pill { height: 40px; display: flex; align-items: center; padding-left: 7px; flex: none; font-size: 18.200px; color: #444; }
.marks-pill + .marks-pill { border-top: 1px solid #e4e4e4; }
.marks-pill svg { width: 13px; height: 13px; color: #555; margin-right: 8px; flex: none; }

.work { width: 1446px; flex: none; display: flex; flex-direction: column; gap: 7px; }
.shelf { height: 31px; background: #f8f8f8; border: 1px solid #d4d4d4; display: flex; align-items: center; gap: 2px; flex: none; }
.shelf-label { width: 160px; height: 100%; border-right: 1px solid #d4d4d4; display: flex; align-items: center; padding: 1px 0 0 8px; gap: 9px; font-size: 15.500px; color: #555; flex: none; margin-right: -2px; }
.shelf-label svg { width: 11px; height: 13px; }
.pill { height: 24px; width: 178px; border-radius: 12px; color: #fff; font-size: 16.400px; display: flex; align-items: center; justify-content: space-between; padding-left: 14px; padding-right: 14px; flex: none; white-space: nowrap; }
.pill svg { width: 11px; height: 11px; }
.blue-pill { background: #4b8db0; width: 179px; }
.green-pill { background: #0fb083; }

/* viz */
.canvas { height: 729px; background: #fff; border: 1px solid #d4d4d4; flex: none; }
.viz-title { height: 52px; text-align: center; font-size: 26.800px; line-height: 52px; color: #111; font-weight: 300; }
.plot { width: 928px; margin-left: 10px; border-right: 1px solid #c8c8c8; }
.prow { display: grid; grid-template-columns: 186px 740px; }
.plot-cell { border-left: 1px solid #c8c8c8; position: relative; min-height: 0; }
.head { height: 21px; border-bottom: 1px solid #c8c8c8; }
.head-cell { text-align: center; font-size: 16.300px; line-height: 21px; color: #555; }
.pane { height: 310px; border-bottom: 1px solid #c8c8c8; grid-template-rows: 309px; }
.axis { display: flex; height: 309px; min-height: 0; }
.axis-title { width: 20px; margin-left: 7px; writing-mode: vertical-rl; transform: rotate(180deg); align-self: center; font-size: 16.200px; color: #4c4c4c; line-height: 20px; display: flex; align-items: center; gap: 5px; white-space: nowrap; flex: none; }
.axis-title svg { width: 12px; height: 12px; transform: rotate(90deg); flex: none; }
.pane-a .axis-title { margin-top: -17px; }
.pane-a .ticks { margin-left: 1px; }
.pane-b .axis-title { font-size: 16.500px; margin-top: -3px; }
.pane-b .ticks { margin-left: 1px; }
.ticks { flex: 1; text-align: right; padding-right: 8px; font-size: 16px; color: #949494; }
.tick { line-height: 18px; white-space: nowrap; }
.pane-a .ticks { padding-top: 5px; }
.pane-a .tick { height: 59px; }
.pane-a .tick:last-child { margin-top: -11px; height: 18px; }
.pane-b .ticks { padding-top: 13px; font-size: 15.500px; }
.pane-b .tick { height: 72px; }
.pane-b .tick:last-child { margin-top: -12px; height: 18px; }
.gridlines { position: absolute; inset: 0; display: flex; flex-direction: column; }
.gridlines i { display: block; border-top: 1px solid #f0f0f0; flex: none; }
.pane-a .gridlines { padding-top: 14px; }
.pane-a .gridlines i { height: 59px; }
.pane-b .gridlines { padding-top: 22px; }
.pane-b .gridlines i { height: 72px; }
.bars { position: relative; display: flex; gap: 26px; padding-left: 11px; height: 309px; }
.bcol { width: 80px; height: 100%; display: flex; flex-direction: column; align-items: center; justify-content: flex-end; flex: none; }
.bar { width: 80px; background: #4e79a7; flex: none; }
.vlabel { writing-mode: vertical-rl; transform: rotate(180deg); font: 16px/18px "Liberation Sans", Arial, sans-serif; color: #333; margin-bottom: 4px; white-space: nowrap; }
.hlabel { font-size: 16px; line-height: 18px; color: #333; margin-bottom: 4px; white-space: nowrap; }
.xrow { height: 23px; }
.xcats { display: flex; gap: 26px; padding-left: 11px; height: 23px; }
.xcats span { width: 80px; flex: none; display: flex; justify-content: center; white-space: nowrap; font-size: 15.500px; line-height: 25px; color: #888; letter-spacing: .35px; }

/* tabs & status */
.tabs { height: 36px; flex: none; background: #e8e8e8; border-top: 1px solid #d8d8d8; display: flex; font-size: 15.700px; color: #666; }
.tab { border-right: 1px solid #d4d4d4; border-bottom: 1px solid #d4d4d4; display: flex; align-items: center; padding-left: 9px; padding-bottom: 2px; white-space: nowrap; overflow: hidden; }
.tab svg { width: 11px; height: 13px; margin-right: 4px; }
.t1 { width: 162px; font-size: 16px; }
.t2 { width: 242px; padding-left: 8px; }
.t3 { width: 251px; padding-left: 7px; }
.t4 { width: 107px; padding-left: 6px; }
.t5 { width: 193px; padding-left: 7px; }
.t6 { width: 125px; padding-left: 9px; }
.tn { width: 33px; padding-left: 8px; }
.tn svg { width: 18px; height: 18px; margin: 0; }
.active { background: #fff; font-weight: 700; font-size: 16.200px; color: #555; border-bottom-color: #fff; }

.status { height: 26px; flex: none; background: #f4f4f4; display: flex; align-items: center; font-size: 13.700px; color: #333; }
.s1, .s2, .s3 { padding-bottom: 2px; }
.s1 { margin-left: 4px; width: 77px; }
.s2 { width: 143px; white-space: nowrap; }
.s3 { font-size: 14.200px; }
.status .cells { margin-left: auto; display: flex; height: 100%; }
.cells > i { display: block; border-left: 1px solid #d8d8d8; }
.c156 { width: 156px; } .c32 { width: 32px; } .c57 { width: 57px; }
.navcell { width: 71px; border-left: 1px solid #d8d8d8; display: flex; align-items: center; justify-content: space-between; padding: 0 7px 0 8px; }
.navcell svg { width: 8px; height: 10px; }
.viewcell { width: 70px; border-left: 1px solid #d8d8d8; display: flex; align-items: center; justify-content: space-between; padding: 0 6px 0 7px; }
.viewcell svg { width: 12px; height: 14px; }

/* taskbar */
.taskbar { height: 50px; flex: none; display: flex; align-items: center; color: #fff; background: linear-gradient(90deg, #35191a 0%, #3c2320 25%, #3e2f25 50%, #41372a 70%, #473829 85%, #3f3a2b 100%); }
.start { width: 60px; height: 100%; display: flex; align-items: center; justify-content: center; flex: none; }
.start svg { width: 21px; height: 21px; }
.tsearch { width: 360px; height: 100%; background: #f2f2f2; border-top: 1px solid #ccc; display: flex; align-items: center; flex: none; color: #333; }
.mag { width: 20px; height: 20px; margin-left: 15px; }
.tsearch span { margin: -2px 0 0 14px; font: 18px "Open Sans", sans-serif; color: #333; }
.spark { width: 76px; height: 46px; margin-left: auto; margin-right: 12px; }
.tapp { width: 62px; height: 100%; display: flex; align-items: center; justify-content: center; flex: none; position: relative; }
.tapp > svg { width: 30px; height: 30px; }
.tapp.open::after, .tapp.current::after { content: ""; position: absolute; left: 7px; right: 5px; bottom: 0; height: 3px; background: #76b9ed; }
.tapp.current { background: rgba(255,255,255,.14); }
.tapp.current::after { left: 0; right: 0; }
.wa-badge { position: absolute; left: 36px; top: 27px; width: 18px; height: 18px; border: 1px solid #ccc; border-radius: 50%; background: #2f2f2f; font: 700 12px/16px "Open Sans", sans-serif; text-align: center; }
.helpic { width: 30px; height: 32px; margin-left: 300px; flex: none; }
.helpq { font: 700 17px "Open Sans", sans-serif; fill: #fff; text-anchor: middle; }
.sun { width: 25px; height: 25px; border-radius: 50%; margin-left: 98px; background: radial-gradient(circle at 40% 30%, #f4b04c, #ee8a12); flex: none; }
.temp { margin-left: 13px; font: 17px "Open Sans", sans-serif; color: #eee; flex: none; }
.weather { margin-left: 13px; width: 55px; font: 18.500px "DejaVu Sans", "Noto Sans", sans-serif; color: #eee; flex: none; white-space: nowrap; }
.chev { width: 16px; height: 10px; margin-left: 31px; flex: none; }
.cam { width: 14px; height: 22px; margin-left: 16px; flex: none; }
.batt { width: 20px; height: 16px; margin-left: 12px; flex: none; }
.eng { margin-left: 13px; font: 14px "Open Sans", sans-serif; color: #eee; flex: none; }
.clock { width: 72px; margin-left: 15px; display: flex; flex-direction: column; align-items: center; gap: 6px; font: 14.200px/17px "Open Sans", sans-serif; color: #eee; flex: none; }
.notif { width: 24px; height: 24px; margin-left: 23px; position: relative; flex: none; }
.notif svg { width: 20px; height: 20px; position: absolute; left: 0; top: 0; }
.notif b { position: absolute; left: 9px; top: 9px; width: 20px; height: 20px; border: 1px solid #999; border-radius: 50%; background: #3c3c35; font: 700 12px/18px "Open Sans", sans-serif; text-align: center; }

/* watermark laid over the page */
.watermark { position: absolute; left: 834px; top: 940px; width: 252px; height: 134px; display: flex; flex-direction: column; align-items: center; pointer-events: none; }
.wm-ar { font: 700 70px/82px "DejaVu Sans", sans-serif; color: rgba(110,110,110,.22); height: 84px; white-space: nowrap; }
.wm-m { font: 400 39px/26px Lato, sans-serif; color: rgba(205,205,205,.62); height: 20px; letter-spacing: .6px; }
.wm-n { font: 700 36.500px/30px Lato, sans-serif; color: rgba(255,255,255,.72); letter-spacing: .4px; }
```
